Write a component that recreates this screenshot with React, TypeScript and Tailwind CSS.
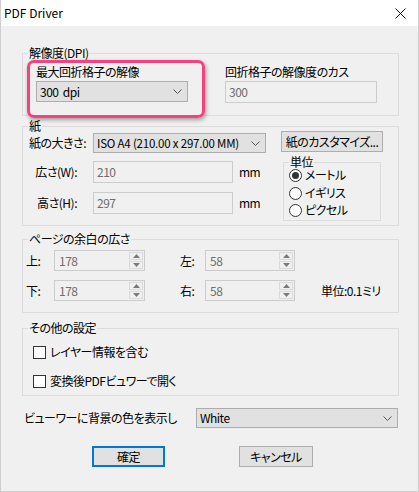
import React from 'react';

type Kids = { children?: React.ReactNode };

function Group({ title, className = '', children }: Kids & { title: string; className?: string }) {
  return (
    <fieldset className={`border border-[#dcdcdc] ${className}`}>
      <legend className="ml-[5px] px-px leading-[14px]">{title}</legend>
      {children}
    </fieldset>
  );
}

function Chevron() {
  return (
    <svg width="9" height="5" viewBox="0 0 9 5" className="shrink-0">
      <polyline points="0.5,0.5 4.5,4.5 8.5,0.5" fill="none" stroke="#555555" strokeWidth="1" />
    </svg>
  );
}

function Select({ value, className = '', textClass = '' }: { value: string; className?: string; textClass?: string }) {
  return (
    <div className={`flex items-center border border-[#adadad] bg-[#e1e1e1] pl-[3px] pr-[5px] ${className}`}>
      <span className={`flex-1 whitespace-pre leading-[14px] ${textClass}`}>{value}</span>
      <Chevron />
    </div>
  );
}

function TextBox({ value, className = '' }: { value: string; className?: string }) {
  return (
    <div className={`flex items-center border border-[#cccccc] bg-[#f0f0f0] pl-[3px] text-[#6d6d6d] ${className}`}>
      <span className="leading-[14px]">{value}</span>
    </div>
  );
}

function Spin({ value, className = '' }: { value: string; className?: string }) {
  return (
    <div className={`flex h-[21px] border border-[#cccccc] bg-[#f0f0f0] ${className}`}>
      <span className="flex-1 pl-[4px] leading-[19px] text-[#6d6d6d]">{value}</span>
      <div className="flex w-[16px] flex-col gap-px p-px">
        <div className="flex flex-1 items-center justify-center border border-[#dadada]">
          <svg width="7" height="4" viewBox="0 0 7 4">
            <polygon points="0,4 3.5,0 7,4" fill="#7a7a7a" />
          </svg>
        </div>
        <div className="flex flex-1 items-center justify-center border border-[#dadada]">
          <svg width="7" height="4" viewBox="0 0 7 4">
            <polygon points="0,0 7,0 3.5,4" fill="#7a7a7a" />
          </svg>
        </div>
      </div>
    </div>
  );
}

function Radio({ label, checked = false, className = '' }: { label: string; checked?: boolean; className?: string }) {
  return (
    <div className={`flex h-[14px] items-center pl-[5px] ${className}`}>
      <span className="flex h-[13px] w-[13px] items-center justify-center rounded-full border border-[#333333] bg-white">
        {checked && <span className="h-[7px] w-[7px] rounded-full bg-[#333333]" />}
      </span>
      <span className="ml-[3px] leading-[14px]">{label}</span>
    </div>
  );
}

function Check({ label, className = '' }: { label: string; className?: string }) {
  return (
    <div className={`flex h-[14px] items-center ${className}`}>
      <span className="h-[13px] w-[13px] border border-[#333333] bg-white" />
      <span className="ml-[4px] leading-[14px]">{label}</span>
    </div>
  );
}

function Button({ label, className = '' }: { label: string; className?: string }) {
  return (
    <div className={`flex h-[21px] items-center justify-center bg-[#e1e1e1] leading-[14px] ${className}`}>
      {label}
    </div>
  );
}

export default function App() {
  return (
    <div className="relative h-[492px] w-[419px] border-x border-b border-[#cfcfcf] bg-[#f0f0f0] font-['Noto_Sans_CJK_JP',sans-serif] text-[12px] tracking-[-0.5px] text-black [font-feature-settings:'palt']">
      {/* title bar */}
      <div className="flex h-[26px] items-center bg-white pl-[3px]">
        <span className="flex-1 leading-[14px] tracking-normal">PDF Driver</span>
        <svg width="11" height="11" viewBox="0 0 11 11" className="mr-[12px]">
          <line x1="0.5" y1="0.5" x2="10.5" y2="10.5" stroke="#111" strokeWidth="1" />
          <line x1="10.5" y1="0.5" x2="0.5" y2="10.5" stroke="#111" strokeWidth="1" />
        </svg>
      </div>

      <div className="flex flex-col pl-[21px] pt-[20px]">
        <Group title="解像度(DPI)" className="w-[377px]">
          <div className="flex gap-[37px] pb-[12px] pl-[13px] pt-[5px]">
            <div className="flex w-[152px] flex-col">
              <span className="leading-[14px]">最大回折格子の解像</span>
              <Select value="300  dpi" className="mt-[2px] h-[21px] w-[152px]" />
            </div>
            <div className="flex w-[152px] flex-col">
              <span className="leading-[14px]">回折格子の解像度のカス</span>
              <TextBox value="300" className="mt-[2px] h-[22px] w-[152px]" />
            </div>
          </div>
        </Group>

        <Group title="紙" className="mt-[3px] w-[377px]">
          <div className="flex h-[92px] items-start pl-[6px]">
            <div className="flex w-[237px] flex-col">
              <div className="flex h-[20px] items-center">
                <span className="w-[64px] leading-[14px]">紙の大きさ:</span>
                <Select
                  value="ISO A4 (210.00 x 297.00 MM)"
                  className="h-[20px] w-[173px]"
                  textClass="text-[11.5px] tracking-[-0.2px]"
                />
              </div>
              <div className="mt-[8px] flex h-[22px] items-center">
                <span className="w-[48px] text-right leading-[14px]">広さ(W):</span>
                <TextBox value="210" className="ml-[16px] h-[22px] w-[140px]" />
                <span className="ml-[6px] leading-[14px]">mm</span>
              </div>
              <div className="mt-[9px] flex h-[22px] items-center">
                <span className="w-[48px] text-right leading-[14px]">高さ(H):</span>
                <TextBox value="297" className="ml-[16px] h-[22px] w-[140px]" />
                <span className="ml-[6px] leading-[14px]">mm</span>
              </div>
            </div>
            <div className="ml-[15px] flex flex-col">
              <Button label="紙のカスタマイズ..." className="-mt-[2px] h-[20px] w-[102px] border border-[#adadad]" />
              <Group title="単位" className="ml-[2px] mt-[3px] w-[98px]">
                <div className="flex flex-col pb-[3px]">
                  <Radio label="メートル" checked className="-mt-px" />
                  <Radio label="イギリス" className="mt-[4px]" />
                  <Radio label="ピクセル" className="mt-[3px]" />
                </div>
              </Group>
            </div>
          </div>
        </Group>

        <Group title="ページの余白の広さ" className="mt-[6px] w-[377px]">
          <div className="flex flex-col pb-[11px] pl-[3px] pt-[4px]">
            <div className="flex h-[21px] items-center">
              <span className="w-[28px] leading-[14px]">上:</span>
              <Spin value="178" className="w-[91px]" />
              <span className="ml-[35px] w-[25px] leading-[14px]">左:</span>
              <Spin value="58" className="w-[90px]" />
            </div>
            <div className="mt-[9px] flex h-[21px] items-center">
              <span className="w-[28px] leading-[14px]">下:</span>
              <Spin value="178" className="w-[91px]" />
              <span className="ml-[35px] w-[25px] leading-[14px]">右:</span>
              <Spin value="58" className="w-[90px]" />
              <span className="ml-[26px] leading-[14px]">単位:0.1ミリ</span>
            </div>
          </div>
        </Group>

        <Group title="その他の設定" className="mt-[8px] w-[377px]">
          <div className="flex flex-col pb-[7px] pl-[10px] pt-[10px]">
            <Check label="レイヤー情報を含む" />
            <Check label="変換後PDFビュワーで開く" className="mt-[15px]" />
          </div>
        </Group>

        <div className="mt-[12px] flex h-[20px] items-center">
          <span className="ml-[2px] w-[172px] leading-[14px]">ビューワーに背景の色を表示し</span>
          <Select value="White" className="h-[20px] w-[202px]" />
        </div>

        <div className="mt-[18px] flex">
          <Button label="確定" className="ml-[70px] w-[73px] border-2 border-[#0078d7]" />
          <Button label="キャンセル" className="ml-[74px] w-[74px] border border-[#adadad]" />
        </div>
      </div>

      {/* highlight marker drawn over the first group */}
      <div className="pointer-events-none absolute left-[26px] top-[60px] h-[58px] w-[178px] rounded-[7px] border-[3px] border-[#f8407e] shadow-[1px_2px_4px_rgba(0,0,0,0.35)]" />
    </div>
  );
}
